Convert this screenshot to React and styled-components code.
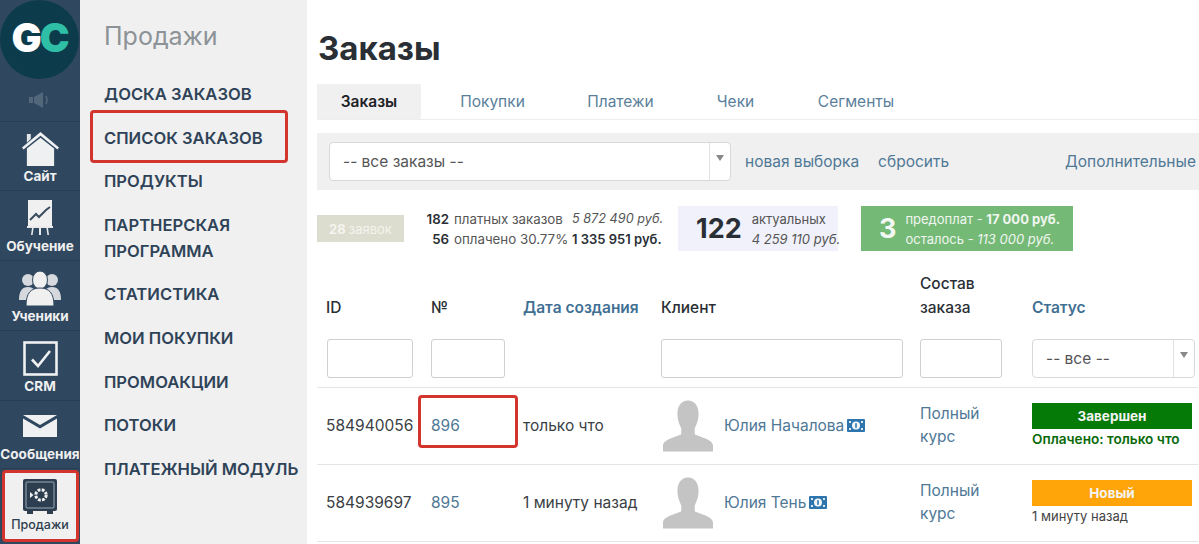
import React from "react";
import styled, { createGlobalStyle } from "styled-components";

const GlobalStyle = createGlobalStyle`
    html, body {
        margin: 0;
        padding: 0;
        height: 544px;
        overflow: hidden;
        background: #fff;
        font-family: Inter, "Liberation Sans", sans-serif;
    }
    * { box-sizing: border-box; }
`;

const Page = styled.div`
    display: flex;
    width: 1199px;
    height: 544px;
    overflow: hidden;
`;

/* левая колонка с иконками */
const Rail = styled.aside`
    width: 80px;
    flex: none;
    background: #30485f;
    display: flex;
    flex-direction: column;
`;

const LogoCircle = styled.div`
    width: 79px;
    height: 79px;
    border-radius: 50%;
    background: #0c3c4c;
    display: flex;
    align-items: center;
    justify-content: center;
    font-size: 40px;
    font-weight: 900;
    letter-spacing: -2px;
    color: #fff;
    padding-bottom: 4px;
`;

const LogoC = styled.span`
    color: #2fbfa6;
`;

const SpeakerRow = styled.div`
    height: 43px;
    flex: none;
    display: flex;
    align-items: center;
    justify-content: center;
    border-bottom: 1px solid #283e53;
`;

const RailItem = styled.div`
    height: ${(p) => p.$h}px;
    flex: none;
    display: flex;
    flex-direction: column;
    align-items: center;
    justify-content: flex-end;
    gap: ${(p) => p.$gap ?? 2}px;
    padding-bottom: 6px;
    color: #f0f0f0;
    font-size: 13.5px;
    font-weight: 700;
    white-space: nowrap;
    border-bottom: 1px solid #283e53;
`;

const ActiveRail = styled.div`
    height: 72px;
    margin: 1px 1px 0 2px;
    flex: none;
    background: #f0f0f0;
    border: 3px solid #d1352e;
    border-radius: 4px;
    display: flex;
    flex-direction: column;
    align-items: center;
    gap: 3px;
    padding-top: 6px;
    padding-right: 1px;
    color: #2e3e4e;
    font-size: 12.5px;
    font-weight: 500;
`;

/* вторая колонка меню */
const SubMenu = styled.nav`
    width: 227px;
    flex: none;
    background: #f0f0f0;
    padding: 20px 0 0 24px;
    position: relative;
`;

const SubTitle = styled.div`
    font-size: 25px;
    line-height: 32px;
    color: #8c9296;
    margin-bottom: 29px;
`;

const SubLink = styled.div`
    font-size: 16.6px;
    line-height: 26px;
    font-weight: 600;
    color: #2f4358;
    margin-bottom: 17.6px;
`;

const RedFrame = styled.div`
    position: absolute;
    border: 3px solid #d1352e;
    border-radius: 4px;
    left: ${(p) => p.$x}px;
    top: ${(p) => p.$y}px;
    width: ${(p) => p.$w}px;
    height: ${(p) => p.$h}px;
`;

/* контент */
const Main = styled.main`
    flex: 1;
    min-width: 0;
    padding: 26px 0 0 10px;
    color: #2a2f35;
`;

const Title = styled.h1`
    margin: 0 0 14px 1px;
    font-size: 33px;
    line-height: 44px;
    font-weight: 700;
    color: #2a2f35;
`;

const Tabs = styled.div`
    display: flex;
    height: 36px;
    border-bottom: 1px solid #eee;
    margin-bottom: 13px;
`;

const Tab = styled.div`
    width: ${(p) => p.$w}px;
    display: flex;
    align-items: center;
    justify-content: center;
    font-size: 15.5px;
    background: ${(p) => (p.$active ? "#f0f0f0" : "transparent")};
    color: ${(p) => (p.$active ? "#1f2226" : "#5b7f9b")};
    font-weight: ${(p) => (p.$active ? 600 : 400)};
`;

const FilterBar = styled.div`
    height: 57px;
    background: #f0f0f0;
    display: flex;
    align-items: center;
    padding-left: 12px;
    font-size: 15.5px;
    white-space: nowrap;
`;

const SelectBox = styled.div`
    width: ${(p) => p.$w}px;
    height: 39px;
    flex: none;
    background: #fff;
    border: 1px solid #d8d8d8;
    border-radius: 4px;
    display: flex;
    align-items: center;
    justify-content: space-between;
    padding-left: 13px;
    font-size: 15.5px;
    color: #555;
`;

const SelectArrow = styled.div`
    width: 21px;
    height: 100%;
    border-left: 1px solid #e2e2e2;
    display: flex;
    justify-content: center;
    padding-top: 12px;

    &::after {
        content: "";
        width: 0;
        height: 0;
        border-left: 4px solid transparent;
        border-right: 4px solid transparent;
        border-top: 6px solid #888;
    }
`;

const BarLink = styled.span`
    color: #4f7896;
    margin-left: ${(p) => p.$ml}px;
`;

const Stats = styled.div`
    display: flex;
    align-items: center;
    height: 45px;
    margin-top: 16px;
`;

const LeadsBadge = styled.div`
    width: 87px;
    height: 27px;
    background: #dcdccf;
    color: #f5f5ee;
    font-size: 13px;
    display: flex;
    align-items: center;
    justify-content: center;
    gap: 3px;
`;

const Strong = styled.b`
    font-weight: 700;
`;

const PaidGrid = styled.div`
    display: grid;
    grid-template-columns: 27px 113px 90px;
    column-gap: 5px;
    margin-left: 18px;
    font-size: 13.3px;
    line-height: 20px;
    white-space: nowrap;
    color: #555;
`;

const PaidNum = styled.span`
    text-align: right;
    font-weight: 600;
    color: #2a2f35;
`;

const PaidSum = styled.span`
    font-size: ${(p) => (p.$bold ? 13 : 12.7)}px;
    font-style: ${(p) => (p.$bold ? "normal" : "italic")};
    font-weight: ${(p) => (p.$bold ? 600 : 400)};
    color: ${(p) => (p.$bold ? "#2a2f35" : "#555")};
`;

const ActualBox = styled.div`
    width: 160px;
    height: 45px;
    margin-left: 16px;
    background: #f1f1fb;
    display: flex;
    align-items: center;
    padding-left: 18px;
    gap: 10px;
`;

const BigNum = styled.div`
    font-size: 27px;
    font-weight: 700;
    color: ${(p) => p.$color};
`;

const SmallLines = styled.div`
    font-size: 13px;
    line-height: 20px;
    white-space: nowrap;
    color: ${(p) => p.$color};
`;

const Italic = styled.em`
    display: block;
    font-style: italic;
`;

const PlainLabel = styled.span`
    font-style: normal;
`;

const PrepayBox = styled.div`
    width: 212px;
    height: 45px;
    margin-left: 23px;
    background: #75b977;
    display: flex;
    align-items: center;
    padding-left: 18px;
    gap: 9px;
`;

const Table = styled.div`
    margin-top: 11px;
    display: grid;
    grid-template-columns: 105px 92px 138px 259px 112px 175px;
    grid-template-rows: 63px 63px 77px 77px;
    font-size: 15.5px;
    position: relative;
    margin-right: -1px;
`;

const HeadCell = styled.div`
    padding: 0 9px 5px;
    display: flex;
    align-items: flex-end;
    line-height: 24px;
    font-weight: ${(p) => (p.$link ? 600 : 500)};
    color: ${(p) => (p.$link ? "#3f6f93" : "#2a2f35")};
`;

const FilterCell = styled.div`
    padding: 14px 9px 0;
    border-bottom: 1px solid #e4e4e4;
`;

const TextInput = styled.div`
    width: ${(p) => p.$w}px;
    height: 39px;
    margin-left: ${(p) => p.$ml ?? 0}px;
    border: 1px solid #d0d0d0;
    border-radius: 3px;
    background: #fff;
`;

const Cell = styled.div`
    padding: 0 9px 2px;
    display: flex;
    align-items: center;
    border-bottom: 1px solid #e4e4e4;
    color: ${(p) => p.$color ?? "#3a3f45"};
    line-height: 23px;
    white-space: nowrap;
`;

const ClientCell = styled(Cell)`
    gap: 11px;
    padding: 0 9px 0 11px;
    color: #4f7896;
`;

const ClientName = styled.span`
    display: flex;
    align-items: center;
    gap: 3px;
    padding-bottom: 2px;
`;

const StatusCell = styled.div`
    padding: 15px 6px 0 9px;
    border-bottom: 1px solid #e4e4e4;
    white-space: nowrap;
`;

const StatusBadge = styled.div`
    height: 26px;
    background: ${(p) => p.$bg};
    color: #f4f4f4;
    font-size: 13.5px;
    font-weight: 700;
    display: flex;
    align-items: center;
    justify-content: center;
`;

const StatusNote = styled.div`
    margin-top: 2px;
    font-size: ${(p) => (p.$paid ? 13.6 : 13)}px;
    line-height: 17px;
    font-weight: ${(p) => (p.$paid ? 600 : 400)};
    color: ${(p) => (p.$paid ? "#0a6a0a" : "#444")};
`;

const TableFrame = styled(RedFrame)`
    z-index: 1;
`;

const HouseIcon = () => (
    <svg width="37" height="35" viewBox="0 0 38 36">
        <path d="M5 3h4v5l-4 4z" fill="#e4e7ea" />
        <path d="M0 17 19 1l19 16-1.5 2L19 5 1.5 19z" fill="#eef0f2" />
        <path d="M5 18 19 7l14 11v18H5z" fill="#eef0f2" />
    </svg>
);

const BoardIcon = () => (
    <svg width="26" height="36" viewBox="0 0 26 36">
        <rect x="1" y="0" width="24" height="26" fill="#f0f0f0" />
        <path d="M3 20 9 14l3 3 7-7 4-3" fill="none" stroke="#3a4d60" strokeWidth="2" />
        <path d="M0 26h26v2H0zM5 28h1.6l-1 7H4zM12 28h2v7h-2zM19.4 28H21l1 7h-1.6z" fill="#e8eaec" />
    </svg>
);

const UsersIcon = () => (
    <svg width="42" height="36" viewBox="0 0 42 36">
        <circle cx="9" cy="10" r="6" fill="#d5d9dd" />
        <circle cx="33" cy="10" r="6" fill="#d5d9dd" />
        <path d="M0 30c0-9 3-13 9-13s9 4 9 13zM24 30c0-9 3-13 9-13s9 4 9 13z" fill="#d5d9dd" />
        <ellipse cx="21" cy="10" rx="7.5" ry="9" fill="#f0f0f0" stroke="#30485f" />
        <path d="M7 36c0-13 5-18 14-18s14 5 14 18z" fill="#f0f0f0" stroke="#30485f" />
    </svg>
);

const CheckIcon = () => (
    <svg width="35" height="35" viewBox="0 0 35 35">
        <rect x="1.5" y="1.5" width="32" height="32" fill="none" stroke="#eef0f2" strokeWidth="2.6" />
        <path d="M9 18.5 15 25 27 10" fill="none" stroke="#eef0f2" strokeWidth="2.6" />
    </svg>
);

const MailIcon = () => (
    <svg width="34" height="22" viewBox="0 0 34 22">
        <path d="M0 0h34L17 10z M0 3.5 17 13.5 34 3.5V22H0z" fill="#eef0f2" />
    </svg>
);

const SafeIcon = () => (
    <svg width="34" height="35" viewBox="0 0 34 35">
        <path d="M4 31h6v4H4zM24 31h6v4h-6z" fill="#2c3e50" />
        <rect x="0" y="0" width="34" height="32" rx="2" fill="#2c3e50" />
        <rect x="3" y="3" width="28" height="26" rx="1" fill="none" stroke="#9aabba" strokeWidth="1" />
        <circle cx="18" cy="16" r="5.2" fill="none" stroke="#f0f0f0" strokeWidth="3" strokeDasharray="2.8 1.3" />
        <path d="M7 13 10.5 16 7 19z" fill="#f0f0f0" />
    </svg>
);

const SpeakerIcon = () => (
    <svg width="24" height="16" viewBox="0 0 24 16">
        <path d="M1 5h4v6H1zM6 5l9-5v16l-9-5z" fill="#53677b" />
        <path d="M18 4q2 4 0 8" fill="none" stroke="#53677b" strokeWidth="1.5" />
    </svg>
);

const AvatarIcon = () => (
    <svg width="50" height="52" viewBox="0 0 52 53">
        <path
            d="M26 0c7 0 11 6 11 14 0 6-2 11-4 15v6c5 3 19 5 19 12v6H0v-6c0-7 14-9 19-12v-6c-2-4-4-9-4-15C15 6 19 0 26 0z"
            fill="#c4c4c4"
        />
    </svg>
);

const MoneyIcon = () => (
    <svg width="18" height="13" viewBox="0 0 18 13">
        <rect width="18" height="13" rx="1" fill="#2f75ad" />
        <path d="M2 2h2v2H2zM14 2h2v2h-2zM2 9h2v2H2zM14 9h2v2h-2z" fill="#dbe8f2" />
        <circle cx="9" cy="6.5" r="4" fill="#f2f6fa" />
        <rect x="8.2" y="4.2" width="1.6" height="4.6" fill="#2f75ad" />
    </svg>
);

const subLinks = [
    "ДОСКА ЗАКАЗОВ",
    "СПИСОК ЗАКАЗОВ",
    "ПРОДУКТЫ",
    "ПАРТНЕРСКАЯ ПРОГРАММА",
    "СТАТИСТИКА",
    "МОИ ПОКУПКИ",
    "ПРОМОАКЦИИ",
    "ПОТОКИ",
    "ПЛАТЕЖНЫЙ МОДУЛЬ",
];

const railItems = [
    { label: "Сайт", h: 69, icon: <HouseIcon /> },
    { label: "Обучение", h: 70, icon: <BoardIcon /> },
    { label: "Ученики", h: 70, icon: <UsersIcon /> },
    { label: "CRM", h: 70, icon: <CheckIcon /> },
    { label: "Сообщения", h: 68, gap: 9, icon: <MailIcon /> },
];

const orders = [
    {
        id: "584940056",
        num: "896",
        date: "только что",
        client: "Юлия Началова",
        status: "Завершен",
        bg: "#067a06",
        note: "Оплачено: только что",
        paid: true,
    },
    {
        id: "584939697",
        num: "895",
        date: "1 минуту назад",
        client: "Юлия Тень",
        status: "Новый",
        bg: "#ffa50a",
        note: "1 минуту назад",
        paid: false,
    },
];

const App = () => {
    return (
        <Page>
            <GlobalStyle />

            <Rail>
                <LogoCircle>
                    G<LogoC>C</LogoC>
                </LogoCircle>
                <SpeakerRow>
                    <SpeakerIcon />
                </SpeakerRow>
                {railItems.map((item) => (
                    <RailItem key={item.label} $h={item.h} $gap={item.gap}>
                        {item.icon}
                        {item.label}
                    </RailItem>
                ))}
                <ActiveRail>
                    <SafeIcon />
                    Продажи
                </ActiveRail>
            </Rail>

            <SubMenu>
                <SubTitle>Продажи</SubTitle>
                {subLinks.map((link) => (
                    <SubLink key={link}>{link}</SubLink>
                ))}
                <RedFrame $x={10} $y={110} $w={198} $h={53} />
            </SubMenu>

            <Main>
                <Title>Заказы</Title>
                <Tabs>
                    <Tab $active $w={104}>Заказы</Tab>
                    <Tab $w={143}>Покупки</Tab>
                    <Tab $w={113}>Платежи</Tab>
                    <Tab $w={117}>Чеки</Tab>
                    <Tab $w={124}>Сегменты</Tab>
                </Tabs>

                <FilterBar>
                    <SelectBox $w={402}>
                        -- все заказы --
                        <SelectArrow />
                    </SelectBox>
                    <BarLink $ml={14}>новая выборка</BarLink>
                    <BarLink $ml={19}>сбросить</BarLink>
                    <BarLink $ml={116}>Дополнительные</BarLink>
                </FilterBar>

                <Stats>
                    <LeadsBadge>
                        <Strong>28</Strong> заявок
                    </LeadsBadge>
                    <PaidGrid>
                        <PaidNum>182</PaidNum>
                        <span>платных заказов</span>
                        <PaidSum>5 872 490 руб.</PaidSum>
                        <PaidNum>56</PaidNum>
                        <span>оплачено 30.77%</span>
                        <PaidSum $bold>1 335 951 руб.</PaidSum>
                    </PaidGrid>
                    <ActualBox>
                        <BigNum $color="#2a2f35">122</BigNum>
                        <SmallLines $color="#555">
                            актуальных
                            <Italic>4 259 110 руб.</Italic>
                        </SmallLines>
                    </ActualBox>
                    <PrepayBox>
                        <BigNum $color="#f4f8f4">3</BigNum>
                        <SmallLines $color="#f0f6f0">
                            предоплат - <Strong>17 000 руб.</Strong>
                            <Italic>
                                <PlainLabel>осталось - </PlainLabel>113 000 руб.
                            </Italic>
                        </SmallLines>
                    </PrepayBox>
                </Stats>

                <Table>
                    <HeadCell>ID</HeadCell>
                    <HeadCell>№</HeadCell>
                    <HeadCell $link>Дата создания</HeadCell>
                    <HeadCell>Клиент</HeadCell>
                    <HeadCell>Состав заказа</HeadCell>
                    <HeadCell $link>Статус</HeadCell>

                    <FilterCell><TextInput $w={86} $ml={1} /></FilterCell>
                    <FilterCell><TextInput $w={74} /></FilterCell>
                    <FilterCell />
                    <FilterCell><TextInput $w={242} /></FilterCell>
                    <FilterCell><TextInput $w={82} /></FilterCell>
                    <FilterCell>
                        <SelectBox $w={163}>
                            -- все --
                            <SelectArrow />
                        </SelectBox>
                    </FilterCell>

                    {orders.map((o) => (
                        <React.Fragment key={o.id}>
                            <Cell>{o.id}</Cell>
                            <Cell $color="#4f7896">{o.num}</Cell>
                            <Cell>{o.date}</Cell>
                            <ClientCell>
                                <AvatarIcon />
                                <ClientName>
                                    {o.client}
                                    <MoneyIcon />
                                </ClientName>
                            </ClientCell>
                            <Cell $color="#4f7896">
                                Полный
                                <br />
                                курс
                            </Cell>
                            <StatusCell>
                                <StatusBadge $bg={o.bg}>{o.status}</StatusBadge>
                                <StatusNote $paid={o.paid}>{o.note}</StatusNote>
                            </StatusCell>
                        </React.Fragment>
                    ))}

                    <TableFrame $x={101} $y={133} $w={100} $h={53} />
                </Table>
            </Main>
        </Page>
    );
};

export default App;
